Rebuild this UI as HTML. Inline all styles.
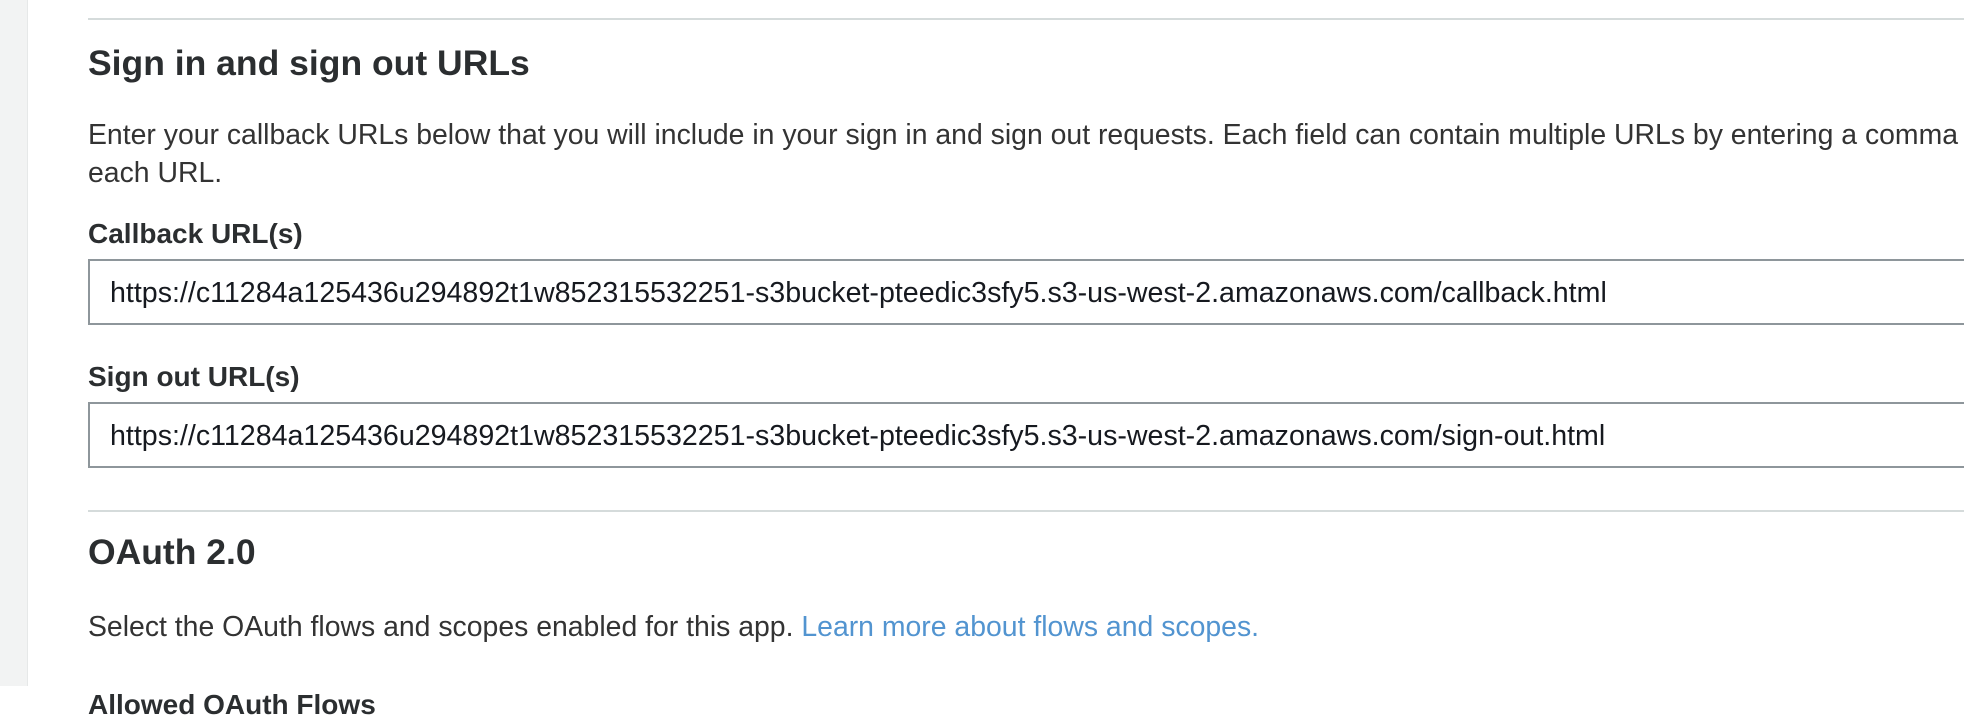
<!DOCTYPE html>
<html><head><meta charset="utf-8"><style>
html,body{margin:0;padding:0;width:1964px;height:686px;overflow:hidden;background:#fff;font-family:"Liberation Sans",Arial,sans-serif;}
.sb{position:absolute;left:0;top:0;width:27px;height:686px;background:#f2f3f3;border-right:1px solid #e6e8e8;}
.a{position:absolute;left:88px;white-space:nowrap;color:#333;}
.rule{position:absolute;left:88px;right:0;height:2px;background:#d5dbdb;}
.h{font-size:35.5px;font-weight:bold;line-height:40px;color:#2b2e30;}
.p{font-size:28.4px;line-height:38px;color:#333;}
.l{font-size:28px;font-weight:bold;line-height:34px;color:#2b2e30;}
.in{position:absolute;left:88px;width:1900px;border:2px solid #8e969b;box-sizing:border-box;background:#fff;}
.in span{position:absolute;left:20px;font-size:28.6px;color:#16191f;white-space:nowrap;}
a{color:#5294d0;text-decoration:none;}
</style></head><body>
<div class="sb"></div>
<div class="rule" style="top:18px"></div>
<div class="a h" style="top:43px">Sign in and sign out URLs</div>
<div class="a p" style="top:116px">Enter your callback URLs below that you will include in your sign in and sign out requests. Each field can contain multiple URLs by entering a comma after<br>each URL.</div>
<div class="a l" style="top:217px">Callback URL(s)</div>
<div class="in" style="top:259px;height:66px"><span style="top:15px;line-height:34px">https://c11284a125436u294892t1w852315532251-s3bucket-pteedic3sfy5.s3-us-west-2.amazonaws.com/callback.html</span></div>
<div class="a l" style="top:360px">Sign out URL(s)</div>
<div class="in" style="top:402px;height:66px"><span style="top:15px;line-height:34px">https://c11284a125436u294892t1w852315532251-s3bucket-pteedic3sfy5.s3-us-west-2.amazonaws.com/sign-out.html</span></div>
<div class="rule" style="top:510px"></div>
<div class="a h" style="top:532px">OAuth 2.0</div>
<div class="a p" style="top:608px">Select the OAuth flows and scopes enabled for this app. <a>Learn more about flows and scopes.</a></div>
<div class="a l" style="top:688px">Allowed OAuth Flows</div>
</body></html>
